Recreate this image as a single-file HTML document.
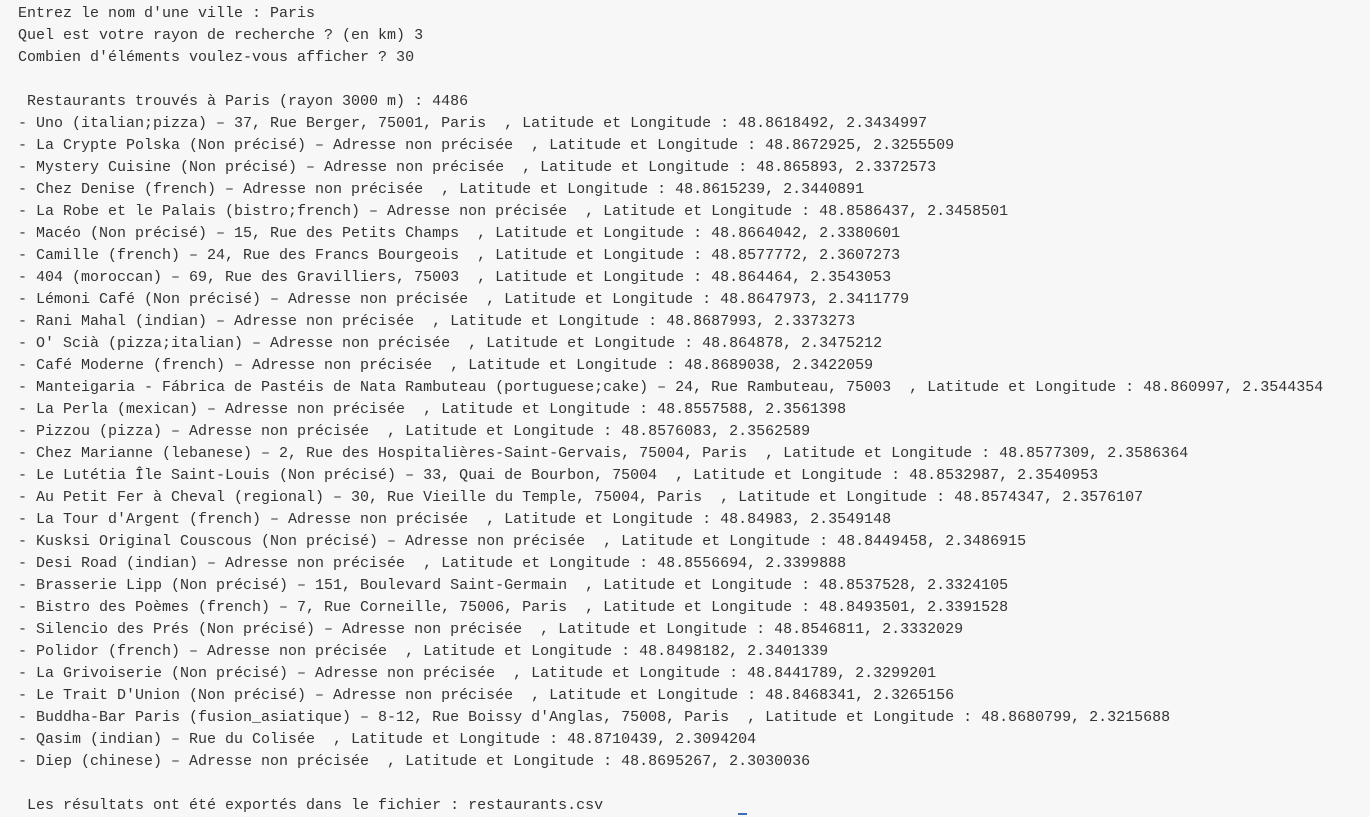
<!DOCTYPE html>
<html><head><meta charset="utf-8"><style>
html,body{margin:0;padding:0;background:#f7f7f7;width:1370px;height:816px;overflow:hidden}
pre{margin:0;position:absolute;left:18px;top:3px;font-family:"Liberation Mono",monospace;font-size:15px;line-height:22px;color:#333;white-space:pre}
.cur{position:absolute;left:738px;top:813px;width:9px;height:2px;background:#3a6fb0}
</style></head><body>
<pre>Entrez le nom d'une ville : Paris
Quel est votre rayon de recherche ? (en km) 3
Combien d'éléments voulez-vous afficher ? 30

 Restaurants trouvés à Paris (rayon 3000 m) : 4486
- Uno (italian;pizza) – 37, Rue Berger, 75001, Paris  , Latitude et Longitude : 48.8618492, 2.3434997
- La Crypte Polska (Non précisé) – Adresse non précisée  , Latitude et Longitude : 48.8672925, 2.3255509
- Mystery Cuisine (Non précisé) – Adresse non précisée  , Latitude et Longitude : 48.865893, 2.3372573
- Chez Denise (french) – Adresse non précisée  , Latitude et Longitude : 48.8615239, 2.3440891
- La Robe et le Palais (bistro;french) – Adresse non précisée  , Latitude et Longitude : 48.8586437, 2.3458501
- Macéo (Non précisé) – 15, Rue des Petits Champs  , Latitude et Longitude : 48.8664042, 2.3380601
- Camille (french) – 24, Rue des Francs Bourgeois  , Latitude et Longitude : 48.8577772, 2.3607273
- 404 (moroccan) – 69, Rue des Gravilliers, 75003  , Latitude et Longitude : 48.864464, 2.3543053
- Lémoni Café (Non précisé) – Adresse non précisée  , Latitude et Longitude : 48.8647973, 2.3411779
- Rani Mahal (indian) – Adresse non précisée  , Latitude et Longitude : 48.8687993, 2.3373273
- O' Scià (pizza;italian) – Adresse non précisée  , Latitude et Longitude : 48.864878, 2.3475212
- Café Moderne (french) – Adresse non précisée  , Latitude et Longitude : 48.8689038, 2.3422059
- Manteigaria - Fábrica de Pastéis de Nata Rambuteau (portuguese;cake) – 24, Rue Rambuteau, 75003  , Latitude et Longitude : 48.860997, 2.3544354
- La Perla (mexican) – Adresse non précisée  , Latitude et Longitude : 48.8557588, 2.3561398
- Pizzou (pizza) – Adresse non précisée  , Latitude et Longitude : 48.8576083, 2.3562589
- Chez Marianne (lebanese) – 2, Rue des Hospitalières-Saint-Gervais, 75004, Paris  , Latitude et Longitude : 48.8577309, 2.3586364
- Le Lutétia Île Saint-Louis (Non précisé) – 33, Quai de Bourbon, 75004  , Latitude et Longitude : 48.8532987, 2.3540953
- Au Petit Fer à Cheval (regional) – 30, Rue Vieille du Temple, 75004, Paris  , Latitude et Longitude : 48.8574347, 2.3576107
- La Tour d'Argent (french) – Adresse non précisée  , Latitude et Longitude : 48.84983, 2.3549148
- Kusksi Original Couscous (Non précisé) – Adresse non précisée  , Latitude et Longitude : 48.8449458, 2.3486915
- Desi Road (indian) – Adresse non précisée  , Latitude et Longitude : 48.8556694, 2.3399888
- Brasserie Lipp (Non précisé) – 151, Boulevard Saint-Germain  , Latitude et Longitude : 48.8537528, 2.3324105
- Bistro des Poèmes (french) – 7, Rue Corneille, 75006, Paris  , Latitude et Longitude : 48.8493501, 2.3391528
- Silencio des Prés (Non précisé) – Adresse non précisée  , Latitude et Longitude : 48.8546811, 2.3332029
- Polidor (french) – Adresse non précisée  , Latitude et Longitude : 48.8498182, 2.3401339
- La Grivoiserie (Non précisé) – Adresse non précisée  , Latitude et Longitude : 48.8441789, 2.3299201
- Le Trait D'Union (Non précisé) – Adresse non précisée  , Latitude et Longitude : 48.8468341, 2.3265156
- Buddha-Bar Paris (fusion_asiatique) – 8-12, Rue Boissy d'Anglas, 75008, Paris  , Latitude et Longitude : 48.8680799, 2.3215688
- Qasim (indian) – Rue du Colisée  , Latitude et Longitude : 48.8710439, 2.3094204
- Diep (chinese) – Adresse non précisée  , Latitude et Longitude : 48.8695267, 2.3030036

 Les résultats ont été exportés dans le fichier : restaurants.csv</pre>
<div class="cur"></div>
</body></html>
